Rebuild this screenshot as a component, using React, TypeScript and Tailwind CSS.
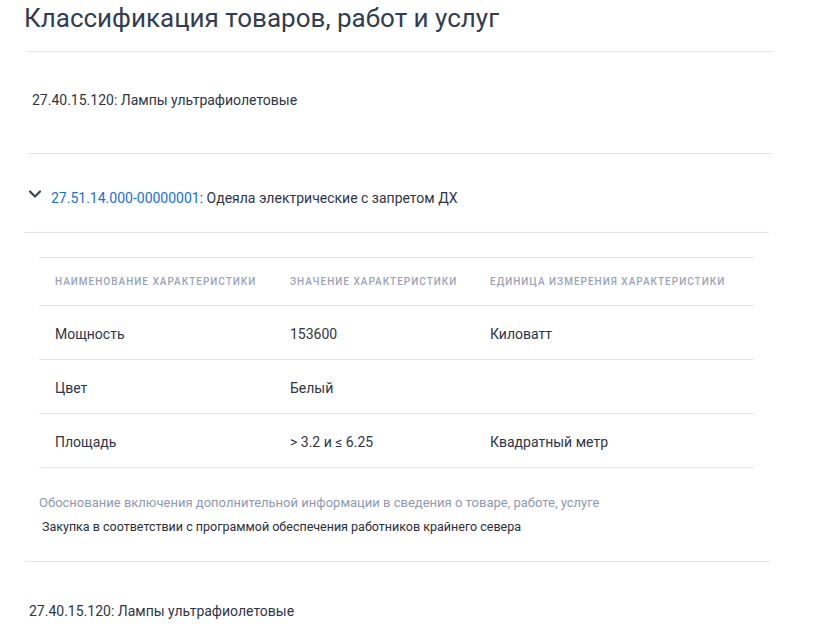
import { ChevronDown } from "lucide-react";

type Feature = {
  name: string;
  value: string;
  unit: string;
};

const features: Feature[] = [
  { name: "Мощность", value: "153600", unit: "Киловатт" },
  { name: "Цвет", value: "Белый", unit: "" },
  { name: "Площадь", value: "> 3.2 и ≤ 6.25", unit: "Квадратный метр" },
];

const th = "text-left font-medium text-[10px] uppercase tracking-[1px] text-[#9ba3b9] px-4 h-[48px]";
const td = "px-4 pt-[3px] h-[54px] text-[14px] text-[#2f3547]";

export default function App() {
  return (
    <div className="min-h-screen bg-white font-['Roboto',sans-serif] text-[#2f3547]">
      <div className="pl-6 pr-[44px]">
        <h1 className="text-[26px] leading-[36px] text-[#323d52] mb-[15px]">
          Классификация товаров, работ и услуг
        </h1>

        <section className="ml-1 border-t border-[#e4e6ef] pt-[38px] pb-[43px] pl-1">
          <p className="text-[14px] leading-5">27.40.15.120: Лампы ультрафиолетовые</p>
        </section>

        <section>
          <div className="ml-1 border-t border-[#e4e6ef]" />
          <div className="mr-[3px] border-b border-[#e4e6ef] pt-[34px] pb-[24px] flex items-start">
            <ChevronDown className="size-5 ml-px mt-[-4px] text-[#3c4356]" strokeWidth={2.6} />
            <p className="ml-[6px] text-[14px] leading-5">
              <span className="text-[#1a6fdc]">27.51.14.000-00000001</span>: Одеяла электрические с запретом ДХ
            </p>
          </div>

          <div className="mr-[3px] px-[15px] pt-6">
            <table className="w-full border-collapse">
              <thead>
                <tr className="border-y border-[#e4e6ef]">
                  <th className={`${th} w-[235px]`}>Наименование характеристики</th>
                  <th className={`${th} w-[200px]`}>Значение характеристики</th>
                  <th className={th}>Единица измерения характеристики</th>
                </tr>
              </thead>
              <tbody>
                {features.map((f) => (
                  <tr key={f.name} className="border-b border-[#e4e6ef]">
                    <td className={td}>{f.name}</td>
                    <td className={td}>{f.value}</td>
                    <td className={td}>{f.unit}</td>
                  </tr>
                ))}
              </tbody>
            </table>

            <p className="mt-[27px] text-[13px] leading-4 text-[#8f99b2]">
              Обоснование включения дополнительной информации в сведения о товаре, работе, услуге
            </p>
            <p className="mt-[8px] ml-[3px] text-[12.5px] leading-4 text-[#2b2e3a]">
              Закупка в соответствии с программой обеспечения работников крайнего севера
            </p>
          </div>

          <div className="mt-[26px] ml-px mr-[2px] border-t border-[#e4e6ef]" />
        </section>

        <section className="pt-[39px] pl-[5px]">
          <p className="text-[14px] leading-5">27.40.15.120: Лампы ультрафиолетовые</p>
        </section>
      </div>
    </div>
  );
}
